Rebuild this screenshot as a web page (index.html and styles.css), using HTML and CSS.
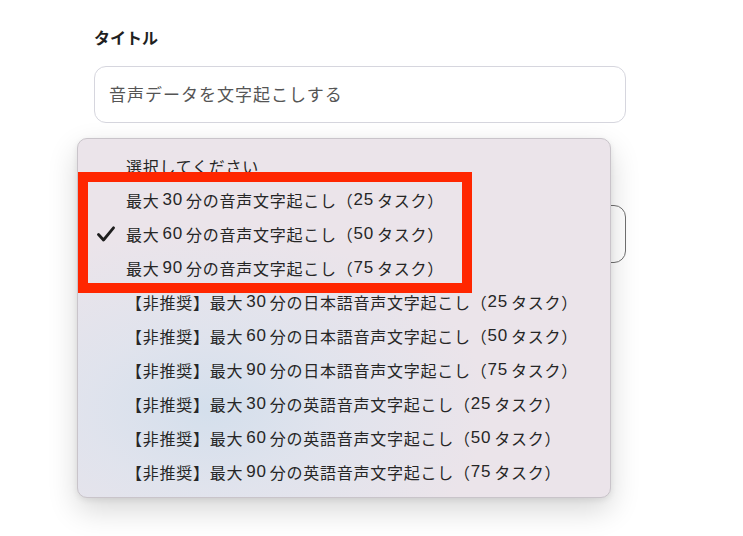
FILE: index.html
```html
<!DOCTYPE html>
<html lang="ja">
<head>
<meta charset="utf-8">
<link rel="stylesheet" href="styles.css">
</head>
<body>
<div class="page">
  <div class="form">
    <div class="field">
      <div class="label">タイトル</div>
      <div class="input">音声データを文字起こしする</div>
    </div>
    <div class="field second">
      <div class="select"></div>
    </div>
  </div>

  <div class="menu">
    <div class="item">選択してください</div>
    <div class="item">最大<span class="n">30</span>分の音声文字起こし（<span class="n r">25</span>タスク）</div>
    <div class="item checked">
      <svg class="check" width="20" height="16" viewBox="0 0 20 16"><path d="M2.5 8.5 L7.5 14 L17.5 1.8" fill="none" stroke="#1e1e1e" stroke-width="2.8" stroke-linecap="round" stroke-linejoin="round"/></svg>
      最大<span class="n">60</span>分の音声文字起こし（<span class="n r">50</span>タスク）</div>
    <div class="item">最大<span class="n">90</span>分の音声文字起こし（<span class="n r">75</span>タスク）</div>
    <div class="item">【非推奨】最大<span class="n">30</span>分の日本語音声文字起こし（<span class="n r">25</span>タスク）</div>
    <div class="item">【非推奨】最大<span class="n">60</span>分の日本語音声文字起こし（<span class="n r">50</span>タスク）</div>
    <div class="item">【非推奨】最大<span class="n">90</span>分の日本語音声文字起こし（<span class="n r">75</span>タスク）</div>
    <div class="item">【非推奨】最大<span class="n">30</span>分の英語音声文字起こし（<span class="n r">25</span>タスク）</div>
    <div class="item">【非推奨】最大<span class="n">60</span>分の英語音声文字起こし（<span class="n r">50</span>タスク）</div>
    <div class="item">【非推奨】最大<span class="n">90</span>分の英語音声文字起こし（<span class="n r">75</span>タスク）</div>
  </div>

  <div class="highlight"></div>
</div>
</body>
</html>
```

FILE: styles.css
```css
* { box-sizing: border-box; }
html, body {
  margin: 0;
  padding: 0;
  background: #ffffff;
}
body {
  width: 743px;
  height: 536px;
  overflow: hidden;
  font-family: "Liberation Sans", "Noto Sans CJK JP", sans-serif;
  color: #262626;
}
.page {
  position: relative;
  width: 743px;
  height: 536px;
}
.form {
  padding: 28px 0 0 94px;
  width: 626px;
  display: flex;
  flex-direction: column;
}
.label {
  font-size: 16px;
  font-weight: 700;
  line-height: 22px;
  color: #1f1f1f;
  margin-bottom: 16px;
}
.input {
  height: 57px;
  border: 1px solid #d6d6de;
  border-radius: 12px;
  padding: 0 14px 3px 14px;
  display: flex;
  align-items: center;
  font-size: 17px;
  letter-spacing: 1px;
  color: #555555;
}
.field.second {
  margin-top: 82px;
}
.select {
  height: 58px;
  border: 1px solid #707070;
  border-radius: 12px;
}
.menu {
  position: absolute;
  left: 77px;
  top: 138px;
  width: 534px;
  height: 360px;
  border-radius: 10px;
  border: 1px solid #c9c4ca;
  background:
    radial-gradient(ellipse 280px 180px at 130px 270px, rgba(212, 223, 236, 1) 0%, rgba(220, 227, 238, 0.7) 45%, rgba(233, 228, 236, 0) 100%),
    #ebe4ea;
  box-shadow: 0 12px 30px rgba(0, 0, 0, 0.16), 0 2px 6px rgba(0, 0, 0, 0.08);
  padding: 10px 0 0 48px;
  display: flex;
  flex-direction: column;
}
.item {
  position: relative;
  height: 34px;
  display: flex;
  align-items: center;
  font-size: 16px;
  letter-spacing: 0.75px;
  color: #262626;
  white-space: nowrap;
}
.n { font-size: 17px; margin: 0 3px 0 3px; }
.n.r { margin-left: 0; }
.check {
  position: absolute;
  left: -30px;
  top: 9px;
}
.highlight {
  position: absolute;
  left: 78px;
  top: 172px;
  width: 394px;
  height: 121px;
  border: 10px solid #ff2600;
}
```
